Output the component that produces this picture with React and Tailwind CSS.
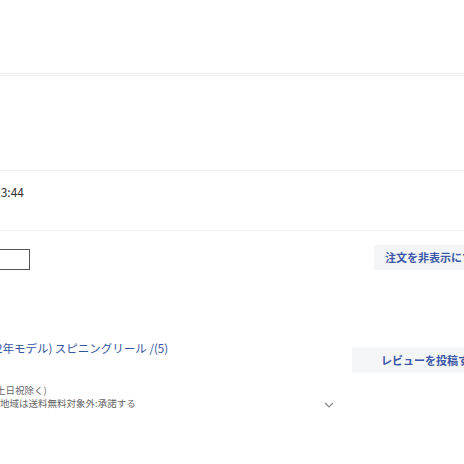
export default function App() {
  return (
    <div
      className="w-[464px] h-[464px] overflow-hidden bg-white text-[#333]"
      style={{ fontFamily: '"Noto Sans CJK JP", "Noto Sans", sans-serif' }}
    >
      <div className="h-[76px] border-b-[3px] border-double border-[#ececec]" />
      <div className="h-[95px] border-b border-[#f0f0f0]" />

      <div className="h-[60px] border-b border-[#eeeeee] pt-[13px]">
        <p className="-ml-[6px] text-[12px] leading-[16px] text-[#333]">13:44</p>
      </div>

      <div className="flex items-center justify-between pt-[14px]">
        <div className="-ml-[12px] mt-[3px] w-[42px] h-[21px] border-[1.5px] border-[#555]" />
        <button className="-mr-[40px] w-[130px] h-[25px] bg-[#f4f5f7] pl-[11px] text-left text-[11px] font-bold text-[#3b57a8] leading-[25px] whitespace-nowrap">
          注文を非表示にする
        </button>
      </div>

      <div className="flex justify-between pt-[71px]">
        <div className="w-[340px]">
          <p className="-ml-[4px] text-[11.5px] leading-[14px] text-[#3354a0] whitespace-nowrap">
            2年モデル) スピニングリール /(5)
          </p>
          <p className="mt-[29px] -ml-[4px] text-[9.5px] leading-[13px] text-[#666] whitespace-nowrap">
            土日祝除く)
          </p>
          <div className="flex items-center justify-between">
            <p className="text-[9.5px] leading-[13px] text-[#666] whitespace-nowrap">
              地域は送料無料対象外:承諾する
            </p>
            <svg width="10" height="6" viewBox="0 0 10 6" className="mr-[6px] mt-[2px]">
              <polyline points="1,1 5,5 9,1" fill="none" stroke="#888" strokeWidth="1.2" />
            </svg>
          </div>
        </div>
        <button className="mt-[6px] -mr-[52px] w-[164px] h-[26px] bg-[#f4f5f7] pl-[29px] text-left text-[11px] font-bold text-[#3b57a8] leading-[26px] whitespace-nowrap">
          レビューを投稿する
        </button>
      </div>
    </div>
  );
}
